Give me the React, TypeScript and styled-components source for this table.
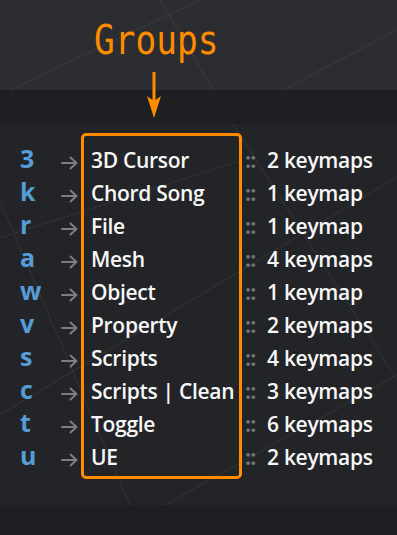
import styled, { createGlobalStyle } from 'styled-components';

const GlobalStyle = createGlobalStyle`
  html, body {
    margin: 0;
    padding: 0;
    background: #1e1f22;
  }
  body {
    font-family: "Open Sans", "Noto Sans", sans-serif;
  }
`;

const Page = styled.div`
  width: 397px;
  height: 535px;
  display: flex;
  flex-direction: column;
  overflow: hidden;
`;

const Header = styled.header`
  position: relative;
  height: 124px;
  flex-shrink: 0;
  display: flex;
  flex-direction: column;
  align-items: flex-start;
  background: linear-gradient(to bottom, #2b2d31 0 90px, #1e1f22 90px 124px);
`;

const Backdrop = styled.svg<{ $h: number }>`
  position: absolute;
  top: 0;
  left: 0;
  width: 397px;
  height: ${(p) => p.$h}px;
  z-index: 0;
  pointer-events: none;
`;

const Title = styled.h1`
  position: relative;
  z-index: 1;
  margin: 20px 0 0 94px;
  font-family: "DejaVu Sans Mono", monospace;
  font-weight: 400;
  font-size: 41px;
  line-height: 41px;
  color: #ff8c00;
  transform: scaleX(0.84);
  transform-origin: left center;
`;

const DownArrow = styled.svg`
  position: relative;
  z-index: 1;
  margin: 11px 0 0 147px;
  width: 14px;
  height: 46px;
`;

const List = styled.section`
  position: relative;
  height: 381px;
  flex-shrink: 0;
  box-sizing: border-box;
  display: flex;
  align-items: flex-start;
  padding: 9px 0 0 20px;
  background: #232428;
`;

const Column = styled.div<{ $width?: number; $pad?: number; $top?: number }>`
  position: relative;
  z-index: 1;
  display: flex;
  flex-direction: column;
  width: ${(p) => (p.$width ? `${p.$width}px` : 'auto')};
  padding: ${(p) => p.$top ?? 11}px 0 0 ${(p) => p.$pad ?? 0}px;
`;

const Key = styled.div`
  height: 33px;
  line-height: 33px;
  font-size: 25px;
  font-weight: 700;
  color: #569cd6;
`;

const ArrowCell = styled.div`
  box-sizing: border-box;
  height: 33px;
  padding-top: 4px;
  display: flex;
  align-items: center;
`;

const GroupBox = styled.div`
  position: relative;
  z-index: 1;
  width: 161px;
  box-sizing: border-box;
  border: 3px solid #ff8c00;
  border-radius: 5px;
  padding: 8px 4px 2px 7px;
`;

const Name = styled.div`
  height: 33px;
  line-height: 33px;
  font-size: 21px;
  font-weight: 600;
  letter-spacing: -0.3px;
  color: #f7f7f7;
  white-space: nowrap;
`;

const CountRow = styled.div`
  display: flex;
  height: 33px;
  line-height: 33px;
  font-size: 21px;
  font-weight: 600;
  white-space: nowrap;
`;

const Sep = styled.span`
  width: 22px;
  color: #74757a;
  font-weight: 700;
  letter-spacing: -0.8px;
`;

const Count = styled.span`
  color: #f7f7f7;
  letter-spacing: -0.3px;
`;

const Footer = styled.footer`
  flex: 1;
  background: #1e1f22;
`;

const groups = [
  { key: '3', name: '3D Cursor', count: 2 },
  { key: 'k', name: 'Chord Song', count: 1 },
  { key: 'r', name: 'File', count: 1 },
  { key: 'a', name: 'Mesh', count: 4 },
  { key: 'w', name: 'Object', count: 1 },
  { key: 'v', name: 'Property', count: 2 },
  { key: 's', name: 'Scripts', count: 4 },
  { key: 'c', name: 'Scripts | Clean', count: 3 },
  { key: 't', name: 'Toggle', count: 6 },
  { key: 'u', name: 'UE', count: 2 },
];

const lineColor = 'rgba(255,255,255,0.06)';

const RightArrow = () => (
  <svg width="17" height="14" viewBox="0 0 17 14">
    <path
      d="M1 7 H15.5 M9.5 1.5 L15.5 7 L9.5 12.5"
      fill="none"
      stroke="#7d7e82"
      strokeWidth="2"
      strokeLinecap="round"
      strokeLinejoin="round"
    />
  </svg>
);

const App = () => {
  return (
    <Page>
      <GlobalStyle />
      <Header>
        <Backdrop $h={90} viewBox="0 0 397 90">
          <g stroke={lineColor} strokeWidth="1.2">
            <line x1="160" y1="0" x2="213" y2="90" />
            <line x1="10" y1="90" x2="200" y2="0" />
            <line x1="283" y1="90" x2="397" y2="30" />
          </g>
        </Backdrop>
        <Title>Groups</Title>
        <DownArrow viewBox="0 0 14 46">
          <rect x="5.5" y="0" width="3" height="30" fill="#ff8c00" />
          <path d="M0 24 L7 29 L14 24 L7 46 Z" fill="#ff8c00" />
        </DownArrow>
      </Header>
      <List>
        <Backdrop $h={381} viewBox="0 0 397 381">
          <g stroke={lineColor} strokeWidth="1.2">
            <line x1="233" y1="0" x2="397" y2="256" />
            <line x1="0" y1="291" x2="397" y2="53" />
            <line x1="165" y1="381" x2="397" y2="251" />
            <line x1="0" y1="77" x2="130" y2="381" />
            <line x1="0" y1="114" x2="240" y2="37" />
          </g>
        </Backdrop>
        <Column $width={41} $top={9}>
          {groups.map((g) => (
            <Key key={g.name}>{g.key}</Key>
          ))}
        </Column>
        <Column $width={20}>
          {groups.map((g) => (
            <ArrowCell key={g.name}>
              <RightArrow />
            </ArrowCell>
          ))}
        </Column>
        <GroupBox>
          {groups.map((g) => (
            <Name key={g.name}>{g.name}</Name>
          ))}
        </GroupBox>
        <Column $pad={3}>
          {groups.map((g) => (
            <CountRow key={g.name}>
              <Sep>::</Sep>
              <Count>
                {g.count} {g.count === 1 ? 'keymap' : 'keymaps'}
              </Count>
            </CountRow>
          ))}
        </Column>
      </List>
      <Footer />
    </Page>
  );
};

export default App;
